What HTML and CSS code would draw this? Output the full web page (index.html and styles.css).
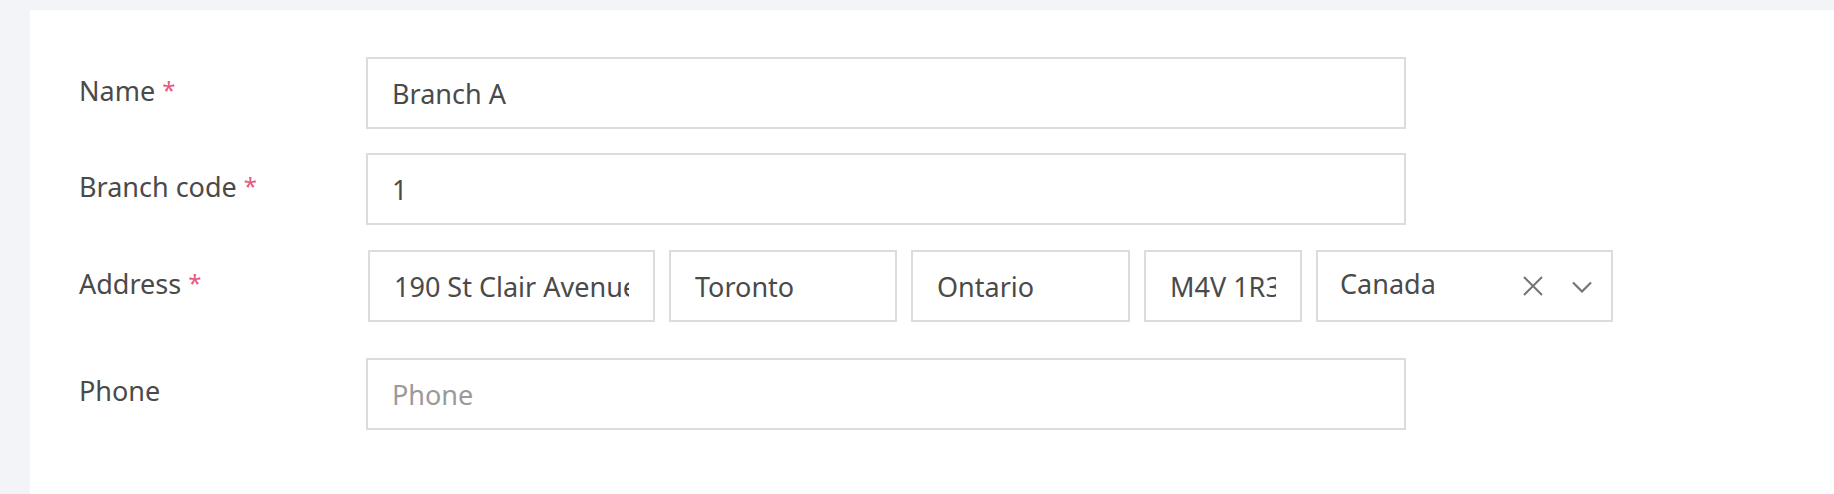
FILE: index.html
```html
<!DOCTYPE html>
<html lang="en">
<head>
<meta charset="utf-8">
<title>Branch</title>
<link rel="stylesheet" href="styles.css">
</head>
<body>
<div class="card">
  <form class="form">
    <div class="row">
      <label class="label">Name <span class="req">*</span></label>
      <input class="field wide" type="text" value="Branch A">
    </div>
    <div class="row">
      <label class="label">Branch code <span class="req">*</span></label>
      <input class="field wide" type="text" value="1">
    </div>
    <div class="row row-address">
      <label class="label">Address <span class="req">*</span></label>
      <div class="address">
        <input class="field street" type="text" value="190 St Clair Avenue West">
        <input class="field city" type="text" value="Toronto">
        <input class="field province" type="text" value="Ontario">
        <input class="field postal" type="text" value="M4V 1R3">
        <div class="field select">
          <span class="select-value">Canada</span>
          <span class="select-icons">
            <svg class="icon-clear" width="20" height="20" viewBox="0 0 20 20"><path d="M1 1 L19 19 M19 1 L1 19" stroke="#757575" stroke-width="2" fill="none"/></svg>
            <svg class="icon-caret" width="20" height="12" viewBox="0 0 20 12"><path d="M1 1.5 L10 10.5 L19 1.5" stroke="#757575" stroke-width="2.2" fill="none"/></svg>
          </span>
        </div>
      </div>
    </div>
    <div class="row">
      <label class="label">Phone</label>
      <input class="field wide" type="text" placeholder="Phone">
    </div>
  </form>
</div>
</body>
</html>
```

FILE: styles.css
```css
html, body {
  margin: 0;
  padding: 0;
  background: #f3f4f8;
  height: 100%;
  overflow: hidden;
}

body {
  font-family: "Noto Sans", "Open Sans", sans-serif;
  color: #4a4a4a;
}

.card {
  margin: 10px 0 0 30px;
  background: #ffffff;
  min-height: 484px;
  padding: 47px 0 0 49px;
  box-sizing: border-box;
}

.form {
  display: flex;
  flex-direction: column;
}

.row {
  display: flex;
  align-items: flex-start;
  margin-bottom: 24px;
}

.row-address {
  margin-bottom: 36px;
  margin-top: 1px;
}

.label {
  width: 287px;
  flex: none;
  margin-top: 15px;
  font-size: 27px;
  line-height: 36px;
  color: #4a4a4a;
}

.req {
  color: #e8587f;
  font-size: 24px;
  vertical-align: 2px;
}

.field {
  box-sizing: border-box;
  height: 72px;
  border: 2px solid #dcdcde;
  background: #ffffff;
  font-family: "Noto Sans", "Open Sans", sans-serif;
  font-size: 27px;
  color: #4a4a4a;
  padding: 0 24px;
  outline: none;
  border-radius: 0;
  margin: 0;
}

.field::placeholder {
  color: #9a9a9a;
}

.wide {
  width: 1040px;
}

.address {
  display: flex;
  gap: 14px;
  margin-left: 2px;
}

.street { width: 287px; }
.city { width: 228px; }
.province { width: 219px; }
.postal { width: 158px; }

.select {
  width: 297px;
  display: flex;
  align-items: center;
  justify-content: space-between;
  padding: 0 19px 0 22px;
}

.select-value {
  line-height: 36px;
  margin-top: -4px;
}

.select-icons {
  display: flex;
  align-items: center;
  gap: 29px;
}

.icon-clear, .icon-caret {
  display: block;
}

.icon-caret {
  margin-top: 2px;
}
```
